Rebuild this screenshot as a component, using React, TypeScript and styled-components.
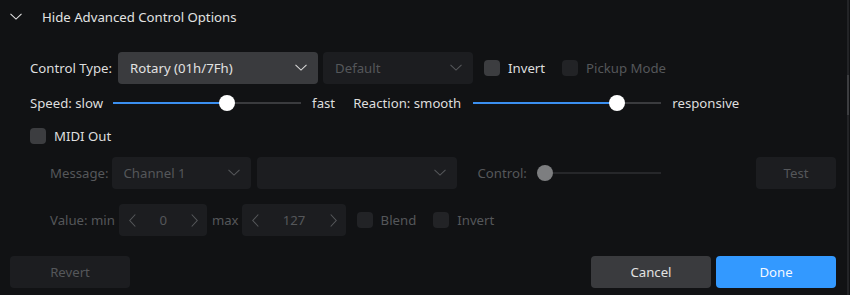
import React from "react";
import styled, { createGlobalStyle } from "styled-components";

const Global = createGlobalStyle`
  html, body { margin: 0; padding: 0; background: #111214; }
  body { font-family: "Noto Sans", "Open Sans", sans-serif; }
`;

const Page = styled.div`
  position: relative;
  width: 850px;
  height: 295px;
  background: #111214;
  color: #dedede;
  font-size: 13.2px;
  overflow: hidden;
  display: flex;
  flex-direction: column;
`;

const ScrollTrack = styled.div`
  position: absolute;
  top: 0;
  right: 1px;
  width: 2px;
  height: 295px;
  background: #232427;
`;

const ScrollThumb = styled.div`
  position: absolute;
  top: 75px;
  right: 1px;
  width: 2px;
  height: 40px;
  background: #3c3d40;
`;

const Header = styled.div`
  height: 34px;
  display: flex;
  align-items: center;
  padding-left: 10px;
  gap: 20px;
  color: #e2e2e2;
`;

const Content = styled.div`
  display: flex;
  flex-direction: column;
  padding-left: 30px;
`;

const Row = styled.div<{ $top: number; $h?: number; $indent?: number }>`
  display: flex;
  align-items: center;
  height: ${(p) => p.$h ?? 32}px;
  margin-top: ${(p) => p.$top}px;
  padding-left: ${(p) => p.$indent ?? 0}px;
`;

const Label = styled.span<{ $dim?: boolean; $ml?: number; $mr?: number }>`
  color: ${(p) => (p.$dim ? "#55575a" : "#dedede")};
  margin-left: ${(p) => p.$ml ?? 0}px;
  margin-right: ${(p) => p.$mr ?? 0}px;
  white-space: nowrap;
`;

const SelectBox = styled.div<{ $w: number; $dim?: boolean; $ml?: number }>`
  width: ${(p) => p.$w}px;
  height: 32px;
  box-sizing: border-box;
  margin-left: ${(p) => p.$ml ?? 0}px;
  border-radius: 4px;
  background: ${(p) => (p.$dim ? "#1c1d20" : "#3a3b3e")};
  color: ${(p) => (p.$dim ? "#55575a" : "#e2e2e2")};
  display: flex;
  align-items: center;
  justify-content: space-between;
  padding: 0 11px 0 12px;
  flex: none;
`;

const Check = styled.div<{ $dim?: boolean; $ml?: number }>`
  width: 16px;
  height: 16px;
  border-radius: 4px;
  background: ${(p) => (p.$dim ? "#222326" : "#3c3d40")};
  margin-left: ${(p) => p.$ml ?? 0}px;
  margin-right: 8px;
  flex: none;
`;

const SliderTrack = styled.div<{ $w: number; $ml: number; $mr: number; $pos: number; $dim?: boolean }>`
  position: relative;
  width: ${(p) => p.$w}px;
  height: 2px;
  margin-left: ${(p) => p.$ml}px;
  margin-right: ${(p) => p.$mr}px;
  background: ${(p) =>
    p.$dim
      ? "#26272a"
      : `linear-gradient(to right, #3b8ff0 0 ${p.$pos}px, #3a3b3e ${p.$pos}px 100%)`};
  flex: none;
`;

const Thumb = styled.div<{ $pos: number; $dim?: boolean }>`
  position: absolute;
  top: -7px;
  left: ${(p) => p.$pos - 8}px;
  width: 16px;
  height: 16px;
  border-radius: 50%;
  background: ${(p) => (p.$dim ? "#7d7e80" : "#ffffff")};
`;

const Spin = styled.div<{ $w: number; $ml?: number }>`
  width: ${(p) => p.$w}px;
  height: 32px;
  box-sizing: border-box;
  margin-left: ${(p) => p.$ml ?? 0}px;
  border-radius: 4px;
  background: #1c1d20;
  color: #55575a;
  display: flex;
  align-items: center;
  justify-content: space-between;
  padding: 0 9px 0 10px;
  flex: none;
`;

const Footer = styled.div`
  display: flex;
  align-items: center;
  margin-top: 20px;
  padding: 0 14px 0 10px;
  height: 32px;
`;

const Button = styled.div<{ $variant: "dim" | "gray" | "blue"; $ml?: number }>`
  width: 120px;
  height: 32px;
  border-radius: 4px;
  margin-left: ${(p) => p.$ml ?? 0}px;
  display: flex;
  align-items: center;
  justify-content: center;
  flex: none;
  background: ${(p) =>
    p.$variant === "blue" ? "#3399ff" : p.$variant === "gray" ? "#3a3b3e" : "#1c1d20"};
  color: ${(p) => (p.$variant === "dim" ? "#55575a" : p.$variant === "blue" ? "#f4f8ff" : "#e2e2e2")};
`;

const TestButton = styled(Button)`
  width: 80px;
  margin-right: 14px;
`;

const Spacer = styled.div`
  flex: 1;
`;

const Chevron = ({ color = "#e2e2e2", size = 12 }: { color?: string; size?: number }) => (
  <svg width={size} height={size * 0.6} viewBox="0 0 12 7" fill="none">
    <path d="M0.5 0.8 L6 6 L11.5 0.8" stroke={color} strokeWidth="1.1" />
  </svg>
);

const Arrow = ({ dir }: { dir: "l" | "r" }) => (
  <svg width="7" height="13" viewBox="0 0 7 13" fill="none">
    <path
      d={dir === "l" ? "M6.3 0.5 L0.8 6.5 L6.3 12.5" : "M0.7 0.5 L6.2 6.5 L0.7 12.5"}
      stroke="#55575a"
      strokeWidth="1.1"
    />
  </svg>
);

export default function App() {
  return (
    <>
      <Global />
      <Page>
        <Header>
          <Chevron />
          <span>Hide Advanced Control Options</span>
        </Header>
        <Content>
          <Row $top={18}>
            <Label>Control Type:</Label>
            <SelectBox $w={200} $ml={6}>
              <span>Rotary (01h/7Fh)</span>
              <Chevron color="#d8d8d8" />
            </SelectBox>
            <SelectBox $w={150} $ml={5} $dim>
              <span>Default</span>
              <Chevron color="#55575a" />
            </SelectBox>
            <Check $ml={11} />
            <Label>Invert</Label>
            <Check $ml={17} $dim />
            <Label $dim>Pickup Mode</Label>
          </Row>
          <Row $top={9} $h={20}>
            <Label>Speed: slow</Label>
            <SliderTrack $w={188} $ml={10} $mr={11} $pos={114}>
              <Thumb $pos={114} />
            </SliderTrack>
            <Label>fast</Label>
            <Label $ml={18}>Reaction: smooth</Label>
            <SliderTrack $w={188} $ml={12} $mr={11} $pos={144}>
              <Thumb $pos={144} />
            </SliderTrack>
            <Label>responsive</Label>
          </Row>
          <Row $top={13} $h={20}>
            <Check />
            <Label>MIDI Out</Label>
          </Row>
          <Row $top={11} $indent={20}>
            <Label $dim>Message:</Label>
            <SelectBox $w={139} $ml={3} $dim>
              <span>Channel 1</span>
              <Chevron color="#55575a" />
            </SelectBox>
            <SelectBox $w={200} $ml={6} $dim>
              <span />
              <Chevron color="#55575a" />
            </SelectBox>
            <Label $dim $ml={21}>Control:</Label>
            <SliderTrack $w={124} $ml={10} $mr={0} $pos={8} $dim>
              <Thumb $pos={8} $dim />
            </SliderTrack>
            <Spacer />
            <TestButton $variant="dim">Test</TestButton>
          </Row>
          <Row $top={15} $indent={20}>
            <Label $dim>Value: min</Label>
            <Spin $w={88} $ml={4}>
              <Arrow dir="l" />
              <span>0</span>
              <Arrow dir="r" />
            </Spin>
            <Label $dim $ml={5} $mr={3}>max</Label>
            <Spin $w={104}>
              <Arrow dir="l" />
              <span>127</span>
              <Arrow dir="r" />
            </Spin>
            <Check $ml={11} $dim />
            <Label $dim>Blend</Label>
            <Check $ml={17} $dim />
            <Label $dim>Invert</Label>
          </Row>
        </Content>
        <Footer>
          <Button $variant="dim">Revert</Button>
          <Spacer />
          <Button $variant="gray">Cancel</Button>
          <Button $variant="blue" $ml={5}>Done</Button>
        </Footer>
        <ScrollTrack />
        <ScrollThumb />
      </Page>
    </>
  );
}
